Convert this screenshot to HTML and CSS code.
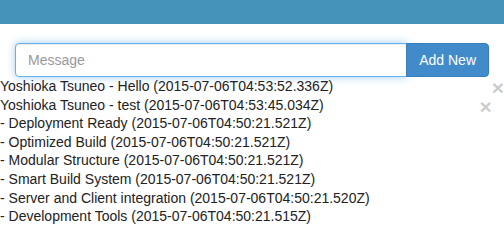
FILE: index.html
```html
<!DOCTYPE html>
<html lang="en">
<head>
    <meta charset="UTF-8">
    <meta name="viewport" content="width=device-width, initial-scale=1.0">
    <title>Messages</title>
    <link rel="stylesheet" href="styles.css">
</head>
<body>
    <!-- Верхняя панель -->
    <div class="topBar"></div>

    <!-- Форма добавления -->
    <div class="formContainer">
        <div class="inputGroup">
            <input class="messageInput" type="text" placeholder="Message">
            <button class="addButton">Add New</button>
        </div>
    </div>

    <!-- Список сообщений -->
    <div class="messageList">
        <div class="messageItem"><span class="closeButton">&times;</span>Yoshioka Tsuneo - Hello (2015-07-06T04:53:52.336Z)</div>
        <div class="messageItem"><span class="closeButton">&times;</span>Yoshioka Tsuneo - test (2015-07-06T04:53:45.034Z)</div>
        <div class="messageItem">- Deployment Ready (2015-07-06T04:50:21.521Z)</div>
        <div class="messageItem">- Optimized Build (2015-07-06T04:50:21.521Z)</div>
        <div class="messageItem">- Modular Structure (2015-07-06T04:50:21.521Z)</div>
        <div class="messageItem">- Smart Build System (2015-07-06T04:50:21.521Z)</div>
        <div class="messageItem">- Server and Client integration (2015-07-06T04:50:21.520Z)</div>
        <div class="messageItem">- Development Tools (2015-07-06T04:50:21.515Z)</div>
    </div>
</body>
</html>
```

FILE: styles.css
```css
/* Основной стиль */
body {
    font-family: "Liberation Sans", Arial, sans-serif;
    font-size: 14px;
    color: #333;
    background-color: #fff;
    margin: 0;
    padding: 0;
}

.topBar {
    height: 24px;
    background-color: #4592bb;
}

/* Форма */
.formContainer {
    padding: 0 15px;
    margin-top: 19px;
}

.inputGroup {
    display: flex;
    height: 34px;
}

.messageInput {
    flex: 1;
    min-width: 0;
    height: 34px;
    box-sizing: border-box;
    padding: 6px 12px;
    font-family: inherit;
    font-size: 14px;
    color: #555;
    border: 1px solid #66afe9;
    border-radius: 4px 0 0 4px;
    outline: none;
    box-shadow: inset 0 1px 1px rgba(0, 0, 0, 0.075), 0 0 8px rgba(102, 175, 233, 0.6);
}

.messageInput::placeholder {
    color: #999;
}

.addButton {
    height: 34px;
    box-sizing: border-box;
    padding: 6px 12px;
    margin-left: -1px;
    font-family: inherit;
    font-size: 14px;
    color: #fff;
    background-color: #428bca;
    border: 1px solid #357ebd;
    border-radius: 0 4px 4px 0;
    cursor: pointer;
}

/* Список */
.messageList {
    line-height: 18.6px;
    color: #222;
}

.closeButton {
    float: right;
    font-size: 21px;
    font-weight: bold;
    line-height: 1;
    color: #000;
    opacity: 0.2;
    text-shadow: 0 1px 0 #fff;
    cursor: pointer;
}
```
